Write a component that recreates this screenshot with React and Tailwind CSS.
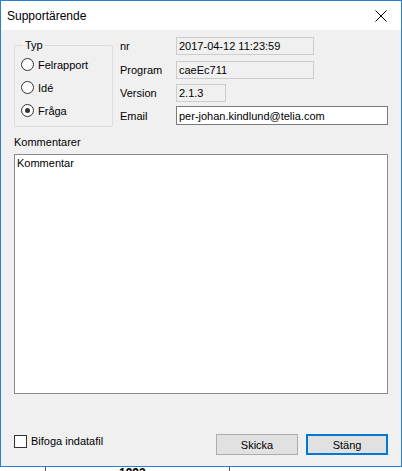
import { useState } from 'react';

const font = { fontFamily: '"Liberation Sans", Arial, sans-serif' };

function Radio({ label, checked }) {
  return (
    <div className="flex items-center h-[23px]">
      <span className="w-[13px] h-[13px] rounded-full border border-[#333] bg-white flex items-center justify-center">
        {checked && <span className="w-[5px] h-[5px] rounded-full bg-[#333]" />}
      </span>
      <span className="ml-[4px]">{label}</span>
    </div>
  );
}

function Field({ label, value, width, readOnly = true, top }) {
  return (
    <div className={`flex items-center ${top}`}>
      <span className="w-[56px]">{label}</span>
      <div
        className={`h-[18px] flex items-center px-[2px] border ${
          readOnly ? 'bg-[#f0f0f0] border-[#cccccc]' : 'bg-white border-[#7a7a7a] h-[19px]'
        } ${width}`}
      >
        {value}
      </div>
    </div>
  );
}

export default function App() {
  const [typ] = useState('fraga');

  return (
    <div className="w-[402px] h-[471px] bg-white overflow-hidden text-[11px] leading-[14px] text-black" style={font}>
      <div className="h-[467px] border border-[#2a7fd4] flex flex-col">
        {/* title bar */}
        <div className="h-[29px] bg-white flex items-center justify-between pl-[6px] pr-[14px] shrink-0">
          <span className="text-[12px]">Supportärende</span>
          <svg width="12" height="12" viewBox="0 0 12 12">
            <path d="M0.5 0.5 L11.5 11.5 M11.5 0.5 L0.5 11.5" stroke="#000" strokeWidth="1" />
          </svg>
        </div>

        <div className="flex-1 bg-[#f0f0f0] pl-[13px] pr-[13px] flex flex-col">
          {/* top section */}
          <div className="flex pt-[7px]">
            <div className="mt-[8px] w-[99px] h-[82px] border border-[#dcdcdc] rounded-[2px] flex flex-col">
              <span className="-mt-[8px] ml-[8px] px-[2px] w-fit bg-[#f0f0f0]">Typ</span>
              <div className="pl-[6px] pt-[1px]">
                <Radio label="Felrapport" checked={typ === 'fel'} />
                <Radio label="Idé" checked={typ === 'ide'} />
                <Radio label="Fråga" checked={typ === 'fraga'} />
              </div>
            </div>

            <div className="ml-[7px] flex flex-col">
              <Field label="nr" value="2017-04-12 11:23:59" width="w-[138px]" top="" />
              <Field label="Program" value="caeEc711" width="w-[138px]" top="mt-[6px]" />
              <Field label="Version" value="2.1.3" width="w-[50px]" top="mt-[5px]" />
              <Field label="Email" value="per-johan.kindlund@telia.com" width="w-[212px]" readOnly={false} top="mt-[4px]" />
            </div>
          </div>

          <span className="mt-[8px]">Kommentarer</span>
          <div className="mt-[5px] h-[240px] bg-white border border-[#8a8a8a] px-[2px] pt-[1px]">Kommentar</div>

          <div className="mt-[40px] flex items-start">
            <div className="flex items-center">
              <span className="w-[13px] h-[13px] border border-[#333] bg-white" />
              <span className="ml-[4px]">Bifoga indatafil</span>
            </div>
            <div className="ml-auto flex gap-[8px]">
              <button className="w-[82px] h-[21px] bg-[#e1e1e1] border border-[#adadad] text-[11px]">Skicka</button>
              <button className="w-[82px] h-[21px] bg-[#e1e1e1] border-2 border-[#0078d7] text-[11px]">Stäng</button>
            </div>
          </div>
        </div>
      </div>

      {/* what peeks out below the dialog */}
      <div className="h-[4px] flex relative overflow-hidden">
        <div className="ml-[45px] w-[185px] border-l border-r border-[#555] flex">
          <span className="ml-[73px] font-bold text-[12px] leading-[12px]">1993</span>
        </div>
      </div>
    </div>
  );
}
